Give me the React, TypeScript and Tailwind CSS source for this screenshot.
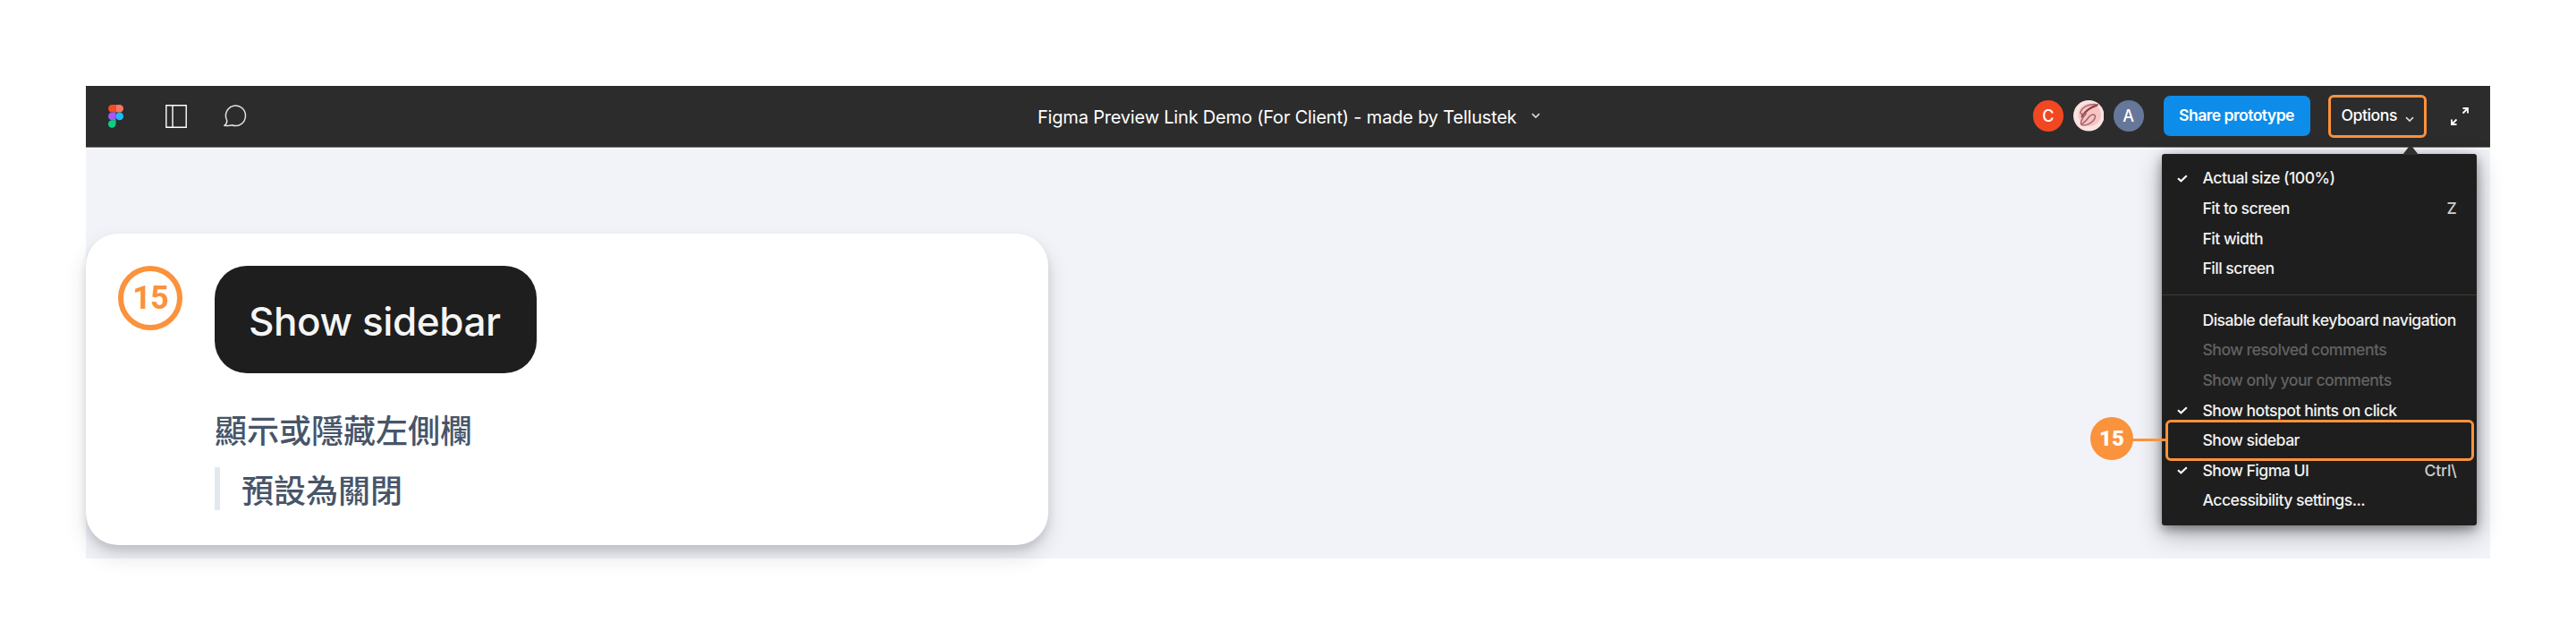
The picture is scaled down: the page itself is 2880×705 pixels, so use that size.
import React from "react";

type Item = { label: string; checked?: boolean; shortcut?: string; muted?: boolean };

const viewItems: Item[] = [
  { label: "Actual size (100%)", checked: true },
  { label: "Fit to screen", shortcut: "Z" },
  { label: "Fit width" },
  { label: "Fill screen" },
];

const toggleItems: Item[] = [
  { label: "Disable default keyboard navigation" },
  { label: "Show resolved comments", muted: true },
  { label: "Show only your comments", muted: true },
  { label: "Show hotspot hints on click", checked: true },
  { label: "Show sidebar" },
  { label: "Show Figma UI", checked: true, shortcut: "Ctrl\\" },
  { label: "Accessibility settings..." },
];

function MenuRow({ item }: { item: Item }) {
  return (
    <li className="flex h-[33.6px] items-center pr-[22.500px] pl-[17px] whitespace-nowrap">
      <span className="w-[28.5px] shrink-0">
        {item.checked && (
          <svg width="12" height="9" viewBox="0 0 12 9" fill="none" stroke="#fff" strokeWidth="2.1">
            <path d="M1 4.2 4.400 7.300 10.800 1.200" />
          </svg>
        )}
      </span>
      <span className={item.muted ? "text-[#626262]" : "text-[#f2f2f2]"}>{item.label}</span>
      {item.shortcut && <span className="ml-auto tracking-[-0.2px] text-[#cfcfcf]">{item.shortcut}</span>}
    </li>
  );
}

function Chevron({ className }: { className: string }) {
  return (
    <svg className={className} width="10" height="7" viewBox="0 0 10 7" fill="none" stroke="#d8d8d8" strokeWidth="1.7">
      <path d="M1 1.2 5 5 9 1.2" />
    </svg>
  );
}

function OptionsMenu() {
  return (
    <div className="absolute top-[76px] left-[2321px] h-[415px] w-[352px] rounded-[3px] bg-[#1e1e1e] pt-[10.800px] text-[17.6px] font-medium tracking-[-0.51px] shadow-[0_9px_28px_rgba(0,0,0,0.32),0_4px_12px_rgba(0,0,0,0.36)]">
      <svg className="absolute -top-[10px] left-[268.500px]" width="18" height="11" viewBox="0 0 18 11">
        <path d="M0 11 7.5 1.5Q9 0 10.5 1.5L18 11Z" fill="#303030" />
      </svg>
      <ul>
        {viewItems.map((item) => (
          <MenuRow key={item.label} item={item} />
        ))}
      </ul>
      <div className="mt-[12px] mb-[11px] h-px bg-[#3b3b3b]" />
      <ul>
        {toggleItems.map((item) => (
          <MenuRow key={item.label} item={item} />
        ))}
      </ul>
      <div className="absolute top-[297px] left-[4px] h-[46px] w-[345px] rounded-[6px] border-[3px] border-[#fb923c]" />
      <div className="absolute top-[318px] left-[-34px] h-[3px] w-[38px] bg-[#fb923c]" />
      <div className="absolute top-[294px] left-[-80px] flex size-12 items-center justify-center rounded-full bg-[#fb923c] font-['Roboto',sans-serif] text-[24px] font-black tracking-normal text-white">
        15
      </div>
    </div>
  );
}

function Toolbar() {
  return (
    <header className="flex h-[69px] shrink-0 items-center border-b border-[#77777b] bg-[#2c2c2c] text-white">
      <div className="flex w-[1064px] items-center pb-[1px]">
        <svg className="ml-[25px]" width="17" height="26" viewBox="0 0 17 26">
          <path d="M8.5 0H4.3a4.3 4.3 0 0 0 0 8.6h4.2Z" fill="#f24e1e" />
          <path d="M8.5 0h4.2a4.3 4.3 0 0 1 0 8.6H8.5Z" fill="#ff7262" />
          <path d="M8.5 8.6H4.3a4.3 4.3 0 0 0 0 8.6h4.2Z" fill="#a259ff" />
          <circle cx="12.7" cy="12.9" r="4.3" fill="#1abcfe" />
          <path d="M8.5 17.2H4.3a4.3 4.3 0 1 0 4.2 4.3Z" fill="#0acf83" />
        </svg>
        <svg className="ml-[47px]" width="24" height="26" viewBox="0 0 24 26" fill="none" stroke="#fff" strokeWidth="1.4">
          <path d="M.8.8h22.4v24.4H.8ZM8 .8v24.4" />
        </svg>
        <svg className="ml-[41px]" width="26" height="25" viewBox="0 0 26 25" fill="none" stroke="#e2e2e2" strokeWidth="1.5">
          <path d="M1 23.2c2.200-1.300 2.800-2.800 2.700-5.700A11 11.300 0 1 1 9.500 22.800C7 23.600 4 23.700 1 23.200Z" />
        </svg>
      </div>
      <div className="flex items-center pt-[2px] text-[20px] tracking-[-0.19px] whitespace-nowrap">
        <span>Figma Preview Link Demo (For Client) - made by Tellustek</span>
        <Chevron className="mb-[3px] ml-[16px]" />
      </div>
      <div className="ml-auto flex items-center pr-[24px] pb-[1px]">
        <div className="flex gap-[10.500px] text-[18px] font-medium">
          <span className="flex size-[34.500px] items-center justify-center rounded-full bg-[#f24822]">C</span>
          <svg width="34.5" height="34.5" viewBox="0 0 34 34" fill="none" strokeLinecap="round">
            <circle cx="17" cy="17" r="17" fill="#fbe3e2" />
            <circle cx="18" cy="16" r="12.500" fill="#f4c6c5" />
            <path d="M26 5.500C20 7 13 12 9.500 18" stroke="#8d3f46" strokeWidth="2.200" />
            <path d="M27 5C19 3 10 7 8 13c-.5 3 3 3 6 1M14 15C10 19 7 25 9 27c4 2 13-2 15-8 1-4-4-5-8 1-2 3-5 5-7 7" stroke="#a9656a" strokeWidth="1.500" />
          </svg>
          <span className="flex size-[34.500px] items-center justify-center rounded-full bg-[#667799]">A</span>
        </div>
        <button className="ml-[21.500px] flex h-[45px] w-[164px] items-center justify-center rounded-[7px] bg-[#0d8ce9] text-[17.600px] font-semibold tracking-[-0.55px] whitespace-nowrap">
          Share prototype
        </button>
        <button className="ml-[20px] flex h-[48px] w-[110.500px] items-center rounded-[6px] border-[3px] border-[#fb923c] pl-[12px] text-[17.600px] font-medium tracking-[-0.42px]">
          Options
          <Chevron className="mt-[7px] ml-[9px]" />
        </button>
        <svg className="ml-[27px]" width="20" height="20" viewBox="0 0 20 20" fill="none" stroke="#fff" strokeWidth="1.800">
          <path d="M13.500 1H19v5.500M19 1l-5.500 5.500M1 13.500V19h5.500M1 19l5.500-5.500" />
        </svg>
      </div>
    </header>
  );
}

function StepCard() {
  return (
    <section className="mt-[94px] flex h-[348px] w-[1076px] items-start gap-9 rounded-[36px] bg-white p-9 shadow-[0_12px_24px_rgba(0,0,0,0.13),0_6px_10px_rgba(0,0,0,0.11)]">
      <div className="flex size-[72px] items-center justify-center rounded-full border-[6px] border-[#fb923c] font-['Roboto',sans-serif] text-[36px] font-bold tracking-[-1px] text-[#fb923c]">
        15
      </div>
      <div>
        <div className="flex h-[120px] w-[360px] items-center rounded-[36px] bg-[#1e1e1e] pt-[4px] pl-[38px] text-[44px] font-[450] tracking-[-0.4px] whitespace-nowrap text-[#f5f5f5]">
          Show sidebar
        </div>
        <div className="mt-[38px] flex flex-col gap-[19px] font-['Noto_Sans_CJK_TC',sans-serif] text-[36px] leading-[48px] font-medium text-[#475569]">
          <p>顯示或隱藏左側欄</p>
          <p className="border-l-[6px] border-[#e2e8f0] pl-6">預設為關閉</p>
        </div>
      </div>
    </section>
  );
}

export default function App() {
  return (
    <div className="h-[705px] w-[2880px] overflow-hidden bg-white p-24 font-['Inter',sans-serif]">
      <main className="relative flex h-[528px] flex-col bg-[#f1f3f9]">
        <Toolbar />
        <div className="h-[2px] shrink-0 bg-[#fbfbfd]" />
        <StepCard />
        <OptionsMenu />
      </main>
    </div>
  );
}
